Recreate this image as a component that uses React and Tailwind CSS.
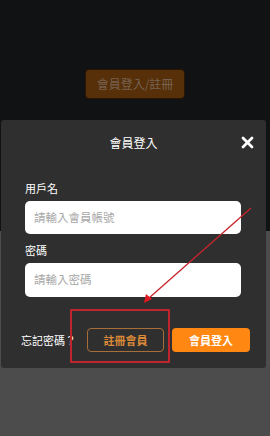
import React from "react";

export default function App() {
  const font = { fontFamily: '"Noto Sans CJK TC", "Noto Sans", sans-serif' };
  return (
    <div className="relative w-[270px] h-[436px] overflow-hidden flex flex-col" style={font}>
      <div className="h-[231px] bg-[#111213] flex justify-center pt-[69px]">
        <div className="w-[100px] h-[30px] rounded-[4px] bg-[#573009] border border-[#2a1604] flex items-center justify-center text-[12px] text-[#76614f]">
          會員登入/註冊
        </div>
      </div>
      <div className="flex-1 bg-[#4c4c4c]" />

      {/* modal */}
      <div className="absolute left-[1px] top-[120px] w-[265px] h-[248px] bg-[#2f2f2f] rounded-[3px] flex flex-col">
        <div className="relative h-[46px] flex items-center justify-center text-white text-[12px]">
          會員登入
          <svg className="absolute left-[240px] top-[16px]" width="13" height="13" viewBox="0 0 13 13">
            <path d="M2 2 L11 11 M11 2 L2 11" stroke="#fff" strokeWidth="2.8" strokeLinecap="round" />
          </svg>
        </div>
        <div className="px-[24px] flex flex-col">
          <div className="mt-[14px] h-[16px] leading-[16px] text-[11px] text-white">用戶名</div>
          <div className="mt-[5px] w-[216px] h-[33px] bg-white rounded-[5px] flex items-center pl-[9px] text-[11.5px] text-[#a8a8a8]">
            請輸入會員帳號
          </div>
          <div className="mt-[8px] h-[16px] leading-[16px] text-[11px] text-white">密碼</div>
          <div className="mt-[5px] w-[216px] h-[34px] bg-white rounded-[5px] flex items-center pl-[9px] text-[11.5px] text-[#a8a8a8]">
            請輸入密碼
          </div>
        </div>
        <div className="mt-[31px] flex items-center pl-[20px]">
          <span className="text-[11px] text-white w-[66px]">忘記密碼？</span>
          <div className="w-[77px] h-[24px] rounded-[4px] border border-[#a86e38] flex items-center justify-center text-[11px] font-bold text-[#dc8a38]">
            註冊會員
          </div>
          <div className="ml-[8px] w-[78px] h-[24px] rounded-[4px] bg-[#ff8712] flex items-center justify-center text-[11px] font-bold text-white">
            會員登入
          </div>
        </div>
      </div>

      {/* annotation rectangle */}
      <div className="absolute left-[70px] top-[309px] w-[100px] h-[54px] border-2 border-[#c0242c]" />
      {/* annotation arrow */}
      <svg className="absolute left-0 top-0" width="270" height="436" viewBox="0 0 270 436">
        <line x1="251" y1="208" x2="149" y2="298" stroke="#c8242c" strokeWidth="1.3" />
        <polygon points="144,303 146,294 152,299" fill="#e01a22" />
      </svg>
    </div>
  );
}
